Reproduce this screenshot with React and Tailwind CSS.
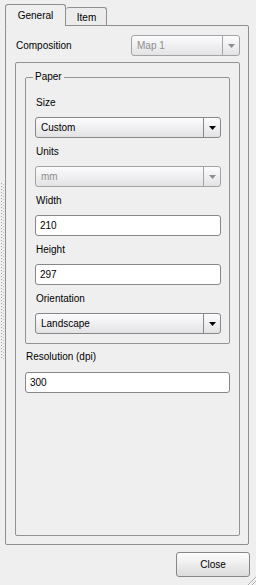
import React from "react";

const Arrow = ({ disabled }) => (
  <svg width="7" height="4" viewBox="0 0 7 4">
    <path d="M0 0H7L3.5 4Z" fill={disabled ? "#8c8c8c" : "#000"} />
  </svg>
);

function Combo({ value, disabled, className = "" }) {
  return (
    <div
      className={`flex h-[21px] rounded-[3px] border bg-[linear-gradient(to_bottom,#fcfbfd,#e3e2e4)] ${
        disabled ? "border-[#a3a3a3]" : "border-[#878787]"
      } ${className}`}
    >
      <div
        className={`flex flex-1 items-center pl-[5px] ${
          disabled ? "text-[#8e8e8e]" : "text-black"
        }`}
      >
        {value}
      </div>
      <div
        className={`flex w-[17px] items-center justify-center border-l ${
          disabled ? "border-[#a3a3a3]" : "border-[#878787]"
        }`}
      >
        <Arrow disabled={disabled} />
      </div>
    </div>
  );
}

function Input({ value }) {
  return (
    <div className="flex h-[21px] items-center rounded-[3px] border border-[#878787] bg-white pl-[4px]">
      {value}
    </div>
  );
}

function Label({ children, className = "" }) {
  return <div className={`h-[14px] pl-[1px] leading-[14px] ${className}`}>{children}</div>;
}

export default function App() {
  return (
    <div className="relative flex h-[585px] w-[256px] flex-col bg-[#efefef] font-['Liberation_Sans',Arial,sans-serif] text-[10px] text-black">
      {/* tabs */}
      <div className="flex items-end pl-[5px] pt-[4px]">
        <div className="relative z-10 flex h-[22px] w-[61px] items-center justify-center rounded-t-[3px] border border-b-0 border-[#8f8f8f] bg-[#efefef] pb-[1px]">
          General
        </div>
        <div className="flex h-[19px] w-[41px] items-center justify-center rounded-t-[3px] border border-b-0 border-l-0 border-[#8f8f8f] bg-[#ececec] pl-[1px]">
          Item
        </div>
      </div>

      {/* pane row */}
      <div className="-mt-px flex">
        <div className="w-[5px]">
          <div className="ml-[1px] mt-[158px] flex h-[177px] gap-[1px]">
            <div className="w-[1px] bg-[repeating-linear-gradient(to_bottom,#a9a9a9_0px,#a9a9a9_1px,transparent_1px,transparent_3px)]" />
            <div className="mt-[1px] w-[1px] bg-[repeating-linear-gradient(to_bottom,#c2c2c2_0px,#c2c2c2_1px,transparent_1px,transparent_3px)]" />
          </div>
        </div>
        <div className="flex h-[520px] w-[244px] flex-col rounded-[2px] border border-[#8f8f8f] pb-[8px] pl-[9px] pr-[8px] pt-[9px]">
          <div className="flex h-[21px] items-center justify-between">
            <div className="pl-[1px]">Composition</div>
            <Combo value="Map 1" disabled className="w-[109px]" />
          </div>

          <div className="mt-[6px] flex flex-1 flex-col rounded-[2px] border border-[#939393] px-[9px] pt-[14px]">
            <div className="relative flex flex-col rounded-[2px] border border-[#939393] pb-[9px] pl-[9px] pr-[8px] pt-[18px]">
              <div className="absolute left-[7px] top-[-8px] bg-[#efefef] px-[2px] leading-[14px]">
                Paper
              </div>
              <Label>Size</Label>
              <Combo value="Custom" className="mt-[7px]" />
              <Label className="mt-[7px]">Units</Label>
              <div className="mt-[7px]">
                <Combo value="mm" disabled />
              </div>
              <Label className="mt-[7px]">Width</Label>
              <div className="mt-[7px]">
                <Input value="210" />
              </div>
              <Label className="mt-[7px]">Height</Label>
              <div className="mt-[7px]">
                <Input value="297" />
              </div>
              <Label className="mt-[7px]">Orientation</Label>
              <Combo value="Landscape" className="mt-[7px]" />
            </div>
            <Label className="mt-[6px]">Resolution (dpi)</Label>
            <div className="mt-[8px]">
              <Input value="300" />
            </div>
          </div>
        </div>
      </div>

      {/* bottom */}
      <div className="mr-[6px] mt-[7px] flex justify-end">
        <button className="flex h-[25px] w-[74px] items-center justify-center rounded-[3px] border border-[#878787] bg-[linear-gradient(to_bottom,#fdfdfd,#dcdcdc)] text-[10px]">
          Close
        </button>
      </div>

      <svg className="absolute bottom-0 right-0" width="9" height="9" viewBox="0 0 9 9">
        <path d="M9 1L1 9" stroke="#a8a8a8" strokeWidth="1" />
        <path d="M9 2L2 9" stroke="#ffffff" strokeWidth="1" />
        <path d="M9 5L5 9" stroke="#a8a8a8" strokeWidth="1" />
        <path d="M9 6L6 9" stroke="#ffffff" strokeWidth="1" />
      </svg>
    </div>
  );
}
